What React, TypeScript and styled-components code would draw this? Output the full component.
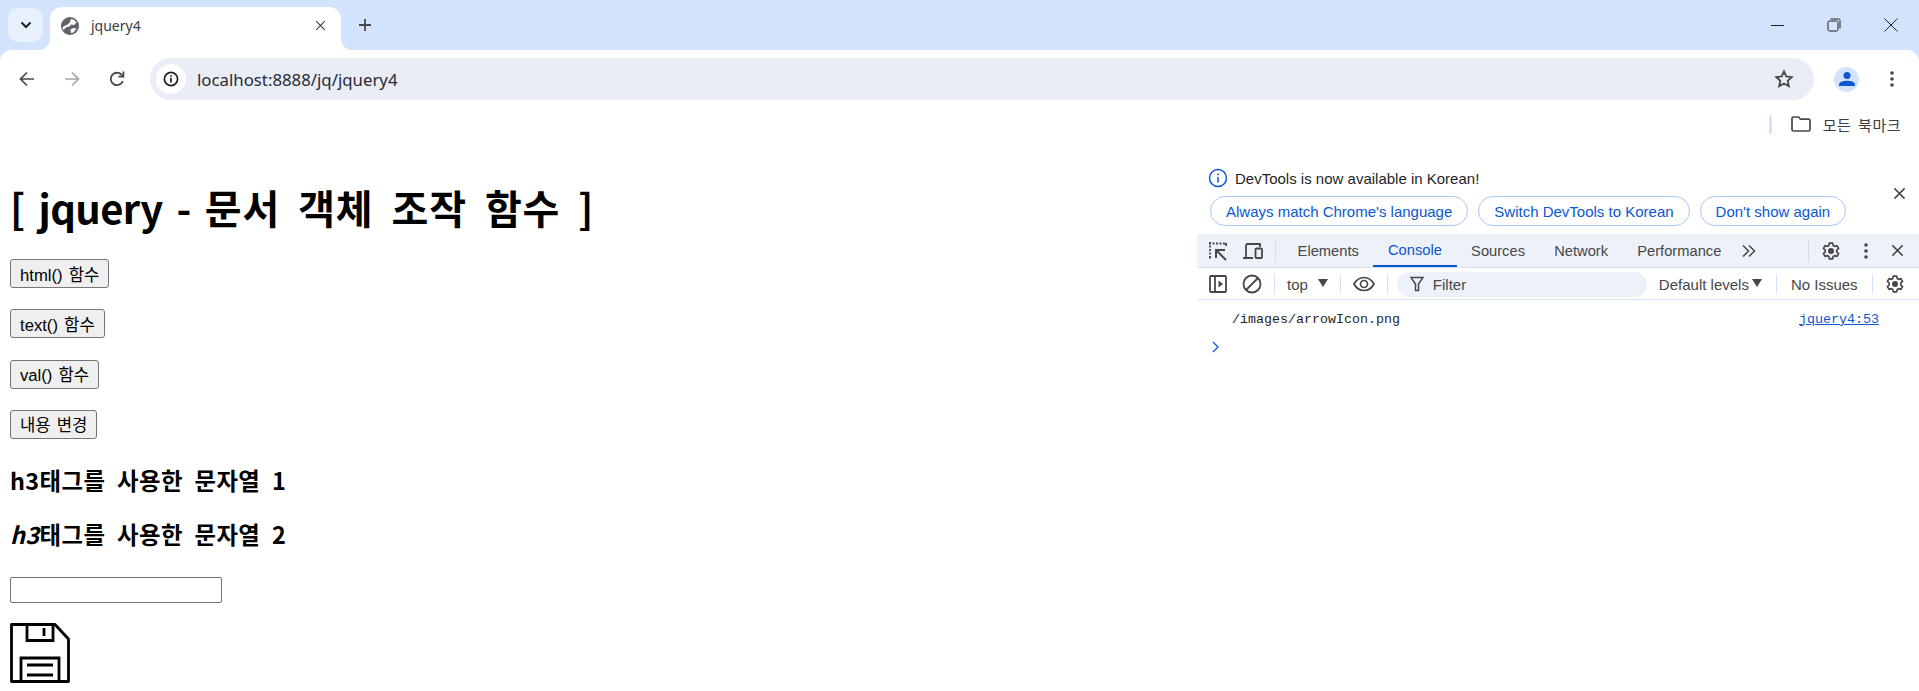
import React from "react";
import styled, { createGlobalStyle } from "styled-components";

const GlobalStyle = createGlobalStyle`
	html, body {
		margin: 0;
		padding: 0;
		background: #fff;
	}
	body {
		width: 1919px;
		height: 691px;
		overflow: hidden;
		font-family: "Liberation Sans", "Noto Sans CJK KR", sans-serif;
	}
`;

const UI_FONT = `"Noto Sans", "Noto Sans CJK KR", sans-serif`;
const DEV_FONT = `"Liberation Sans", "Noto Sans CJK KR", sans-serif`;

const Back = () => (
	<svg width="20" height="20" viewBox="0 0 20 20" fill="none" stroke="#474747" strokeWidth="1.7">
		<path d="M17 10H4M10 3.5 3.5 10l6.5 6.5" />
	</svg>
);

const Forward = () => (
	<svg width="20" height="20" viewBox="0 0 20 20" fill="none" stroke="#a6a6a6" strokeWidth="1.7">
		<path d="M3 10h13M10 3.5l6.5 6.500-6.500 6.500" />
	</svg>
);

const Reload = () => (
	<svg width="20" height="20" viewBox="0 0 20 20" fill="none" stroke="#474747" strokeWidth="1.8">
		<path d="M15.800 12a6.200 6.200 0 1 1-1.300-6.300L16 7.200" />
		<path d="M16.400 2.600v5h-5" />
	</svg>
);

const Gear = ({ size = 20 }: { size?: number }) => (
	<svg width={size} height={size} viewBox="0 0 24 24" fill="none" stroke="#474747" strokeWidth="2" strokeLinejoin="round">
		<path d="M10 2.500h4l.6 2.900 1.700 1 2.800-.9 2 3.400-2.200 2v2.200l2.200 2-2 3.400-2.800-.9-1.700 1-.6 2.900h-4l-.6-2.900-1.700-1-2.800.9-2-3.400 2.200-2v-2.200l-2.200-2 2-3.400 2.800.9 1.700-1z" />
		<circle cx="12" cy="12" r="2.600" fill="#474747" />
	</svg>
);

const Kebab = () => (
	<svg width="4" height="16" viewBox="0 0 4 16" fill="#474747">
		<circle cx="2" cy="2" r="1.800" />
		<circle cx="2" cy="8" r="1.800" />
		<circle cx="2" cy="14" r="1.800" />
	</svg>
);

const Cross = ({ size = 14 }: { size?: number }) => (
	<svg width={size} height={size} viewBox="0 0 14 14" fill="none" stroke="#474747" strokeWidth="1.600">
		<path d="M1.500 1.500l11 11M12.500 1.500l-11 11" />
	</svg>
);

const App = () => {
	return (
		<Window>
			<GlobalStyle />
			<TabStrip>
				<TabSearch>
					<svg width="12" height="8" viewBox="0 0 12 8" fill="none" stroke="#1f1f1f" strokeWidth="2">
						<path d="M1.500 1.500 6 6l4.500-4.500" />
					</svg>
				</TabSearch>
				<Tab>
					<svg width="18" height="18" viewBox="0 0 18 18">
						<circle cx="9" cy="9" r="9" fill="#5f6368" />
						<path d="M10 2c2.400.3 4.300 1.500 5.500 3.500l-2.500 2.500-3-.5-1.500 2-3 .5-3 3-1-2c.8-1.500 2-2.300 3.500-2.800 1.800-.6 3-1.700 3.800-3z" fill="#fff" />
						<path d="M9.500 12.500l3-1.500 3 .5-3 4-2.500.5z" fill="#fff" />
					</svg>
					<TabTitle>jquery4</TabTitle>
					<Cross size={11} />
				</Tab>
				<NewTab>
					<svg width="14" height="14" viewBox="0 0 14 14" fill="none" stroke="#474747" strokeWidth="1.800">
						<path d="M7 1v12M1 7h12" />
					</svg>
				</NewTab>
				<WindowControls>
					<WindowButton>
						<svg width="14" height="14" viewBox="0 0 14 14" stroke="#1f1f1f" strokeWidth="1">
							<path d="M1 7.500h13" />
						</svg>
					</WindowButton>
					<WindowButton>
						<svg width="14" height="14" viewBox="0 0 14 14" fill="none" stroke="#1f1f1f" strokeWidth="1">
							<rect x="1" y="3" width="10" height="10" rx="1.500" />
							<path d="M3.500 1h8A1.500 1.500 0 0 1 13 2.500v8" />
						</svg>
					</WindowButton>
					<WindowButton>
						<svg width="14" height="14" viewBox="0 0 14 14" fill="none" stroke="#1f1f1f" strokeWidth="1">
							<path d="M.5.5l13 13M13.500.5l-13 13" />
						</svg>
					</WindowButton>
				</WindowControls>
			</TabStrip>

			<Toolbar>
				<NavButtons>
					<NavButton><Back /></NavButton>
					<NavButton><Forward /></NavButton>
					<NavButton><Reload /></NavButton>
				</NavButtons>
				<Omnibox>
					<SiteInfo>
						<svg width="16" height="16" viewBox="0 0 16 16" fill="none" stroke="#1f1f1f" strokeWidth="1.700">
							<circle cx="8" cy="8" r="6.600" />
							<path d="M8 7v4.500M8 4.200v1.600" />
						</svg>
					</SiteInfo>
					<Url>localhost:8888/jq/jquery4</Url>
					<svg width="20" height="20" viewBox="0 0 20 20" fill="none" stroke="#474747" strokeWidth="1.800">
						<path d="M10 2.500l2.300 5 5.400.6-4 3.700 1.100 5.400L10 14.500l-4.800 2.700 1.100-5.400-4-3.700 5.400-.6z" />
					</svg>
				</Omnibox>
				<Avatar>
					<svg width="16" height="16" viewBox="0 0 16 16" fill="#0b57d0">
						<circle cx="8" cy="4.500" r="3.500" />
						<path d="M0 15v-1.500c0-2.500 4-3.800 8-3.800s8 1.300 8 3.800V15z" />
					</svg>
				</Avatar>
				<Kebab />
			</Toolbar>

			<BookmarksBar>
				<BarDivider />
				<svg width="20" height="16" viewBox="0 0 20 16" fill="none" stroke="#474747" strokeWidth="1.700">
					<path d="M1 2.500A1.500 1.500 0 0 1 2.500 1h5l2 2.200h8A1.500 1.500 0 0 1 19 4.700v8.800A1.500 1.500 0 0 1 17.500 15h-15A1.500 1.500 0 0 1 1 13.500z" />
				</svg>
				<BookmarkText>모든 북마크</BookmarkText>
			</BookmarksBar>

			<Body>
				<Page>
					<Heading><HeadingLatin>[ jquery - </HeadingLatin>문서 객체 조작 함수 ]</Heading>
					<Para><PageButton>html() 함수</PageButton></Para>
					<Para><PageButton>text() 함수</PageButton></Para>
					<Para><PageButton>val() 함수</PageButton></Para>
					<Para><PageButton>내용 변경</PageButton></Para>
					<SubHeading>h3태그를 사용한 문자열 1</SubHeading>
					<SubHeading><em>h3</em>태그를 사용한 문자열 2</SubHeading>
					<InputRow><PageInput /></InputRow>
					<FloppyIcon width="60" height="60" viewBox="0 0 60 60" fill="none" stroke="#000" strokeWidth="2.800">
						<path d="M1.500 1.500H45L58.500 16V58.500H1.500z" strokeLinejoin="round" />
						<path d="M17 1.500V17.500H43V1.500" />
						<path d="M34 5v8" />
						<path d="M11 58.500V35H49V58.500" />
						<path d="M17 42H43M17 52H43" />
					</FloppyIcon>
				</Page>

				<DevTools>
					<InfoBar>
						<InfoLine>
							<svg width="20" height="20" viewBox="0 0 20 20" fill="none" stroke="#0b57d0" strokeWidth="1.500">
								<circle cx="10" cy="10" r="8.500" />
								<path d="M10 9v5.500M10 5.500v1.700" />
							</svg>
							<InfoText>DevTools is now available in Korean!</InfoText>
						</InfoLine>
						<InfoActions>
							<PillButton>Always match Chrome's language</PillButton>
							<PillButton>Switch DevTools to Korean</PillButton>
							<PillButton>Don't show again</PillButton>
						</InfoActions>
						<InfoClose><Cross size={13} /></InfoClose>
					</InfoBar>

					<TabBar>
						<InspectIcons>
							<svg width="20" height="20" viewBox="0 0 20 20" fill="none" stroke="#474747" strokeWidth="1.800">
								<path d="M1 2.500h18M2 1v16M1 16.500h3" strokeDasharray="2 1.500" />
								<path d="M18 2v3" />
								<path d="M8 17V9h9M8.500 9.500 18 19" strokeWidth="2" />
							</svg>
							<svg width="20" height="20" viewBox="0 0 20 20" fill="none" stroke="#474747" strokeWidth="1.800">
								<path d="M0 17h10M3 17V4.500A1.500 1.500 0 0 1 4.500 3H17v3" />
								<rect x="12.500" y="7.500" width="6.500" height="9.500" rx="1" />
							</svg>
						</InspectIcons>
						<BarSep />
						<PanelTab>Elements</PanelTab>
						<PanelTab $active>Console</PanelTab>
						<PanelTab>Sources</PanelTab>
						<PanelTab>Network</PanelTab>
						<PanelTab>Performance</PanelTab>
						<More>
							<svg width="16" height="14" viewBox="0 0 16 14" fill="none" stroke="#474747" strokeWidth="1.500">
								<path d="M2 1.500 7.500 7 2 12.500M8 1.500 13.500 7 8 12.500" />
							</svg>
						</More>
						<TabBarEnd>
							<EndSep />
							<Gear />
							<Kebab />
							<Cross size={13} />
						</TabBarEnd>
					</TabBar>

					<ConsoleBar>
						<SidebarToggle width="20" height="20" viewBox="0 0 20 20" fill="none" stroke="#474747" strokeWidth="1.800">
							<rect x="2" y="2" width="16" height="16" rx="1" />
							<path d="M7 2v16" />
							<path d="M10.500 6.500l4.500 3.500-4.500 3.500z" fill="#474747" stroke="none" />
						</SidebarToggle>
						<svg width="20" height="20" viewBox="0 0 20 20" fill="none" stroke="#474747" strokeWidth="1.800">
							<circle cx="10" cy="10" r="8.500" />
							<path d="M4 16 16 4" />
						</svg>
						<ToolSep />
						<ContextSelect>top<Caret $gap={10} /></ContextSelect>
						<ToolSep />
						<svg width="22" height="16" viewBox="0 0 22 16" fill="none" stroke="#474747" strokeWidth="1.700">
							<path d="M1 8c2.500-4.500 6-6.500 10-6.500S18.500 3.500 21 8c-2.500 4.500-6 6.500-10 6.500S3.500 12.500 1 8z" />
							<circle cx="11" cy="8" r="3.500" />
						</svg>
						<ToolSep />
						<FilterBox>
							<svg width="14" height="16" viewBox="0 0 14 16" fill="none" stroke="#474747" strokeWidth="1.500">
								<path d="M1 1.500h12L8.500 8v6.500h-3V8z" />
							</svg>
							Filter
						</FilterBox>
						<Levels>Default levels<Caret $gap={3} /></Levels>
						<ToolSep />
						<Issues>No Issues</Issues>
						<ToolSep />
						<Gear />
					</ConsoleBar>

					<LogRow>
						<LogText>/images/arrowIcon.png</LogText>
						<LogLink>jquery4:53</LogLink>
					</LogRow>
					<Prompt>
						<svg width="7" height="12" viewBox="0 0 7 12" fill="none" stroke="#0b57d0" strokeWidth="1.300">
							<path d="M1 1l5 5-5 5" />
						</svg>
					</Prompt>
				</DevTools>
			</Body>
		</Window>
	);
};

export default App;

const Window = styled.div`
	width: 1919px;
	height: 691px;
	display: flex;
	flex-direction: column;
	background: #d3e3fd;
	overflow: hidden;
`;

const TabStrip = styled.div`
	height: 50px;
	flex: none;
	display: flex;
	align-items: flex-end;
	background: #d3e3fd;
	padding-left: 8px;
`;

const TabSearch = styled.div`
	width: 35px;
	height: 34px;
	margin-bottom: 8px;
	border-radius: 10px;
	background: #e9f0fd;
	display: flex;
	align-items: center;
	justify-content: center;
`;

const Tab = styled.div`
	position: relative;
	width: 291px;
	height: 43px;
	margin-left: 7px;
	padding: 0 15px 6px 11px;
	box-sizing: border-box;
	background: #fff;
	border-radius: 12px 12px 0 0;
	display: flex;
	align-items: center;

	&::before,
	&::after {
		content: "";
		position: absolute;
		bottom: 0;
		width: 12px;
		height: 12px;
	}
	&::before {
		left: -12px;
		background: radial-gradient(circle at 0 0, transparent 12px, #fff 12.5px);
	}
	&::after {
		right: -12px;
		background: radial-gradient(circle at 100% 0, transparent 12px, #fff 12.5px);
	}
`;

const TabTitle = styled.span`
	flex: 1;
	margin-left: 12px;
	font: 14px ${UI_FONT};
	color: #3c3c3c;
`;

const NewTab = styled.div`
	margin: 0 0 10px 17px;
	height: 30px;
	display: flex;
	align-items: center;
`;

const WindowControls = styled.div`
	margin-left: auto;
	height: 50px;
	display: flex;
	align-self: flex-start;
`;

const WindowButton = styled.div`
	width: 57px;
	display: flex;
	align-items: center;
	justify-content: center;
`;

const Toolbar = styled.div`
	height: 58px;
	flex: none;
	display: flex;
	align-items: center;
	box-sizing: border-box;
	padding: 0 25px 0 17px;
	background: #fff;
	border-radius: 12px 12px 0 0;
`;

const NavButtons = styled.div`
	display: flex;
	gap: 25px;
	margin-right: 23px;
`;

const NavButton = styled.div`
	width: 20px;
	height: 20px;
`;

const Omnibox = styled.div`
	width: 1665px;
	height: 42px;
	box-sizing: border-box;
	padding: 0 20px 0 6px;
	background: #e9edf6;
	border-radius: 21px;
	display: flex;
	align-items: center;
`;

const SiteInfo = styled.div`
	width: 30px;
	height: 30px;
	background: #fff;
	border-radius: 50%;
	display: flex;
	align-items: center;
	justify-content: center;
`;

const Url = styled.span`
	flex: 1;
	margin-left: 11px;
	font: 16.8px ${UI_FONT};
	color: #2a2a35;
`;

const Avatar = styled.div`
	width: 25px;
	height: 25px;
	margin: 0 31px 0 20px;
	background: #d3e3fd;
	border-radius: 50%;
	display: flex;
	align-items: center;
	justify-content: center;
	overflow: hidden;
`;

const BookmarksBar = styled.div`
	height: 32px;
	flex: none;
	display: flex;
	align-items: center;
	justify-content: flex-end;
	padding-right: 18px;
	background: #fff;
`;

const BarDivider = styled.div`
	width: 3px;
	height: 19px;
	margin-right: 19px;
	border-radius: 2px;
	background: #d3e3fd;
`;

const BookmarkText = styled.span`
	margin-left: 12px;
	font: 15px "Noto Sans CJK KR", sans-serif;
	word-spacing: 3px;
	letter-spacing: 0.5px;
	color: #3c3c3c;
`;

const Body = styled.div`
	flex: 1;
	display: flex;
	min-height: 0;
	background: #fff;
`;

const Page = styled.main`
	width: 1197px;
	flex: none;
	box-sizing: border-box;
	padding: 0 10px;
	overflow: hidden;
`;

const Heading = styled.h1`
	margin: 39px 0 24px;
	font: bold 40px/56px "Noto Sans CJK KR", sans-serif;
	word-spacing: 8px;
	letter-spacing: 0.9px;
	color: #000;
`;

const HeadingLatin = styled.span`
	word-spacing: 5.5px;
	letter-spacing: -0.6px;
`;

const Para = styled.p`
	margin: 0 0 21.3px;
	height: 29px;
`;

const PageButton = styled.button`
	display: block;
	font: 16.67px ${DEV_FONT};
	word-spacing: 1.5px;
	color: #000;
	height: 29px;
	padding: 0 9px;
	background: #efefef;
	border: 1px solid #767676;
	border-radius: 3px;
`;

const SubHeading = styled.h3`
	margin: 25px 0 22px;
	font: bold 23.4px/32px "Noto Sans CJK KR", sans-serif;
	word-spacing: 6px;
	letter-spacing: 0.4px;
	color: #000;
	em {
		font-style: italic;
	}
	& + & {
		margin-top: 0;
	}
`;

const InputRow = styled.div`
	margin: 27px 0 20px;
	height: 26px;
`;

const PageInput = styled.input`
	display: block;
	width: 212px;
	height: 26px;
	box-sizing: border-box;
	border: 1px solid #767676;
	border-radius: 2px;
	background: #fff;
`;

const FloppyIcon = styled.svg`
	display: block;
`;

const DevTools = styled.aside`
	flex: 1;
	min-width: 0;
	display: flex;
	flex-direction: column;
`;

const InfoBar = styled.div`
	position: relative;
	height: 94px;
	flex: none;
	box-sizing: border-box;
	padding: 28px 0 0 11px;
`;

const InfoLine = styled.div`
	display: flex;
	align-items: center;
	gap: 7px;
	height: 20px;
`;

const InfoText = styled.span`
	font: 15px ${DEV_FONT};
	color: #1f1f1f;
`;

const InfoActions = styled.div`
	display: flex;
	gap: 10px;
	margin: 8px 0 0 2px;
`;

const PillButton = styled.div`
	height: 30px;
	padding: 0 15px;
	display: flex;
	align-items: center;
	box-sizing: border-box;
	border: 1px solid #a8c7fa;
	border-radius: 15px;
	font: 15px ${DEV_FONT};
	color: #0b57d0;
`;

const InfoClose = styled.div`
	position: absolute;
	top: 46px;
	right: 13px;
`;

const TabBar = styled.div`
	height: 34px;
	flex: none;
	display: flex;
	align-items: center;
	background: #edf2fa;
	padding-left: 11px;
	border-bottom: 1px solid #d3e3fd;
	box-sizing: border-box;
`;

const InspectIcons = styled.div`
	display: flex;
	gap: 15px;
`;

const BarSep = styled.div`
	width: 1px;
	height: 22px;
	margin: 0 7px 0 12px;
	background: #d3dbe8;
`;

const EndSep = styled(BarSep)`
	margin: 0 -11px 0 0;
`;

const PanelTab = styled.div<{ $active?: boolean }>`
	height: 33px;
	padding: 0 14.6px;
	display: flex;
	align-items: center;
	font: 14.7px ${DEV_FONT};
	color: ${(p) => (p.$active ? "#0b57d0" : "#474747")};
	border-bottom: ${(p) => (p.$active ? "2px solid #0b57d0" : "none")};
	box-sizing: border-box;
`;

const More = styled.div`
	margin-left: 5px;
	display: flex;
`;

const TabBarEnd = styled.div`
	margin-left: auto;
	display: flex;
	align-items: center;
	gap: 23px;
	padding-right: 15px;
`;

const ConsoleBar = styled.div`
	height: 32px;
	flex: none;
	display: flex;
	align-items: center;
	gap: 12px;
	padding: 1px 11px 0 11px;
	border-bottom: 1px solid #d3e3fd;
	box-sizing: border-box;
	background: #fff;
`;

const SidebarToggle = styled.svg`
	margin-right: 2px;
`;

const ToolSep = styled.div`
	width: 1px;
	height: 20px;
	background: #d3e3fd;
`;

const Caret = styled.span<{ $gap: number }>`
	display: inline-block;
	width: 0;
	height: 0;
	margin-left: ${(p) => p.$gap}px;
	border-left: 5.5px solid transparent;
	border-right: 5.5px solid transparent;
	border-top: 8px solid #474747;
	vertical-align: 3px;
`;

const ContextSelect = styled.div`
	font: 15px ${DEV_FONT};
	color: #474747;
	white-space: nowrap;
`;

const FilterBox = styled.div`
	width: 250px;
	height: 25px;
	margin-left: -3px;
	box-sizing: border-box;
	padding-left: 13px;
	display: flex;
	align-items: center;
	gap: 9px;
	background: #edf2fa;
	border-radius: 13px;
	font: 15px ${DEV_FONT};
	color: #474747;
`;

const Levels = styled.div`
	margin-right: 2px;
	font: 15px ${DEV_FONT};
	color: #474747;
	white-space: nowrap;
`;

const Issues = styled.div`
	margin: 0 2px;
	font: 15px ${DEV_FONT};
	color: #474747;
	white-space: nowrap;
`;

const LogRow = styled.div`
	height: 38px;
	flex: none;
	display: flex;
	align-items: center;
	justify-content: space-between;
	padding: 0 40px 0 35px;
	font: 13.33px "Liberation Mono", monospace;
`;

const LogText = styled.span`
	color: #1f1f1f;
`;

const LogLink = styled.span`
	color: #0b57d0;
	text-decoration: underline;
`;

const Prompt = styled.div`
	padding: 3px 0 0 15px;
	display: flex;
`;
